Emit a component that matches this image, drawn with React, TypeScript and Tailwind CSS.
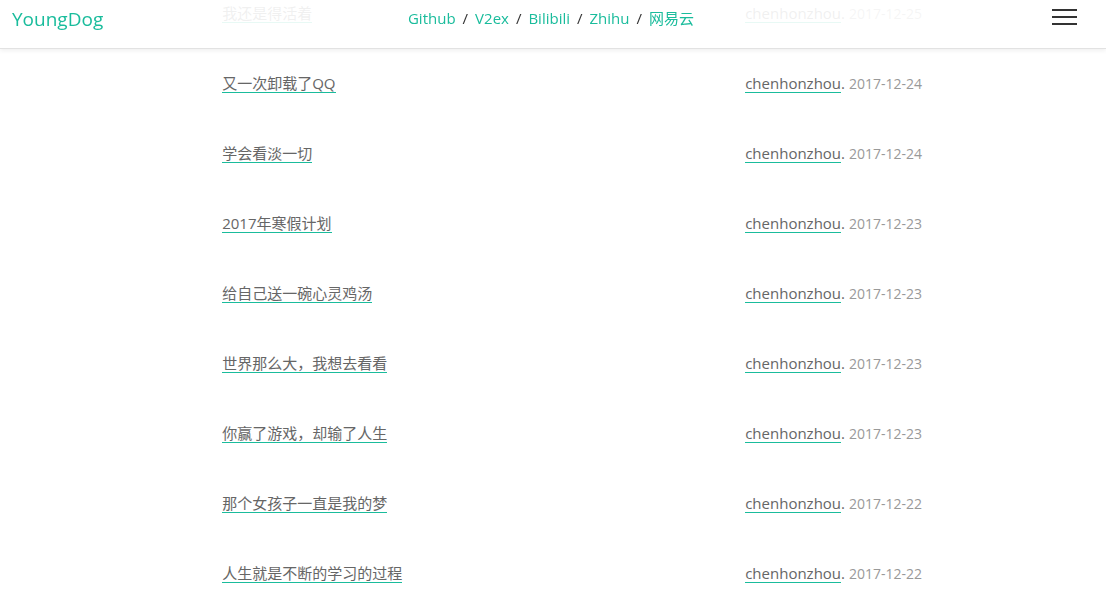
import React from "react";

const posts = [
  ["我还是得活着", "2017-12-25"],
  ["又一次卸载了QQ", "2017-12-24"],
  ["学会看淡一切", "2017-12-24"],
  ["2017年寒假计划", "2017-12-23"],
  ["给自己送一碗心灵鸡汤", "2017-12-23"],
  ["世界那么大，我想去看看", "2017-12-23"],
  ["你赢了游戏，却输了人生", "2017-12-23"],
  ["那个女孩子一直是我的梦", "2017-12-22"],
  ["人生就是不断的学习的过程", "2017-12-22"],
];

const links = ["Github", "V2ex", "Bilibili", "Zhihu", "网易云"];

export default function App() {
  return (
    <div
      className="relative h-[595px] overflow-hidden bg-white"
      style={{ fontFamily: '"Open Sans", "Noto Sans CJK SC", sans-serif' }}
    >
      <header className="fixed top-0 left-0 right-0 z-10 h-[49px] bg-white/90 border-b border-[#e2e2e2] shadow-[0_2px_4px_rgba(0,0,0,0.06)] flex items-center px-3">
        <div className="text-[19px] text-[#1abc9c] -mt-[10px] w-[200px]">YoungDog</div>
        <nav className="flex-1 flex justify-center text-[15px] -mt-[12px] pr-[4px]">
          {links.map((l, i) => (
            <span key={l} className="flex">
              {i > 0 && <span className="text-[#333] mx-[7px]">/</span>}
              <span className="text-[#1abc9c]">{l}</span>
            </span>
          ))}
        </nav>
        <div className="w-[200px] flex justify-end pr-[17px] -mt-[14px]">
          <div className="flex flex-col gap-[5px] w-[25px]">
            <div className="h-[2px] bg-[#333]" />
            <div className="h-[2px] bg-[#333]" />
            <div className="h-[2px] bg-[#333]" />
          </div>
        </div>
      </header>
      <main className="-mt-[22px] ml-[calc(20%+1px)] w-[60%]">
        {posts.map(([t, d]) => (
          <div key={t} className="h-[70px] grid grid-cols-[523px_1fr] items-center whitespace-nowrap">
            <div>
              <span className="text-[15px] leading-[18px] text-[#666] border-b border-[#1abc9c] inline-block pt-[1px]">
                {t}
              </span>
            </div>
            <div className="flex items-center">
              <span className="text-[15px] leading-[18px] text-[#666] border-b border-[#1abc9c] inline-block pt-[1px]">
                chenhonzhou
              </span>
              <span className="text-[15px] text-[#666]">.</span>
              <span className="text-[14px] text-[#999] ml-[4px]">{d}</span>
            </div>
          </div>
        ))}
      </main>
    </div>
  );
}
